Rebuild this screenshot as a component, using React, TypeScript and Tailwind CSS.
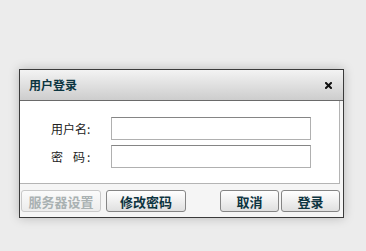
import React from "react";

const cjk = { fontFamily: '"Noto Sans CJK SC", "Liberation Sans", sans-serif' };

type BtnProps = { label: string; width: string; disabled?: boolean };

function Btn({ label, width, disabled }: BtnProps) {
  return (
    <button
      disabled={disabled}
      className={
        disabled
          ? `${width} h-[22px] rounded-[3px] border border-[#c9c9c9] bg-gradient-to-b from-[#fbfbfb] to-[#ececec] text-[13px] font-bold leading-none text-[#a9b1b2]`
          : `${width} h-[22px] rounded-[3px] border border-[#858585] bg-gradient-to-b from-white to-[#e0e0e0] text-[13px] font-bold leading-none text-[#0d3440]`
      }
    >
      {label}
    </button>
  );
}

export default function App() {
  return (
    <div className="w-[366px] h-[251px] bg-[#ececec] pt-[69px] pl-[19px]" style={cjk}>
      <div className="w-[325px] h-[149px] border border-[#3a3a3a] bg-[#f5f5f5] shadow-[0_0_10px_rgba(0,0,0,0.22)] flex flex-col">
        {/* title bar */}
        <div className="h-[31px] shrink-0 border-b border-[#6a6a6a] bg-gradient-to-b from-[#f3f3f3] to-[#cdcdcd] flex items-center justify-between pl-[9px] pr-[11px]">
          <span className="text-[12px] font-bold text-[#0b3540]">用户登录</span>
          <svg width="7" height="7" viewBox="0 0 7 7" className="mt-[1px]">
            <path d="M1 1 L6 6 M6 1 L1 6" stroke="#111" strokeWidth="2" strokeLinecap="square" />
          </svg>
        </div>

        {/* form panel */}
        <div className="h-[83px] shrink-0 mr-[3px] bg-white border-r border-b border-[#b4b4b4] pt-[16px] flex flex-col gap-[5px]">
          <div className="flex items-center">
            <label className="w-[73px] flex justify-end text-[12px] text-[#222]">
              用户名<span className="inline-block w-[6px]">:</span>
            </label>
            <input className="ml-[18px] w-[200px] h-[23px] border border-[#b0b0b0] border-t-[#858585] bg-white outline-none" />
          </div>
          <div className="flex items-center">
            <label className="w-[73px] flex justify-end text-[12px] text-[#222]">
              密<span className="inline-block w-[10px]" />码<span className="inline-block w-[2px]" />
              <span className="inline-block w-[6px]">:</span>
            </label>
            <input type="password" className="ml-[18px] w-[200px] h-[23px] border border-[#b0b0b0] border-t-[#858585] bg-white outline-none" />
          </div>
        </div>

        {/* buttons */}
        <div className="flex-1 flex items-start pt-[6px] pl-[1px] pr-[3px]">
          <Btn label="服务器设置" width="w-[80px]" disabled />
          <div className="w-[5px]" />
          <Btn label="修改密码" width="w-[80px]" />
          <div className="flex-1" />
          <Btn label="取消" width="w-[59px]" />
          <div className="w-[2px]" />
          <Btn label="登录" width="w-[59px]" />
        </div>
      </div>
    </div>
  );
}
